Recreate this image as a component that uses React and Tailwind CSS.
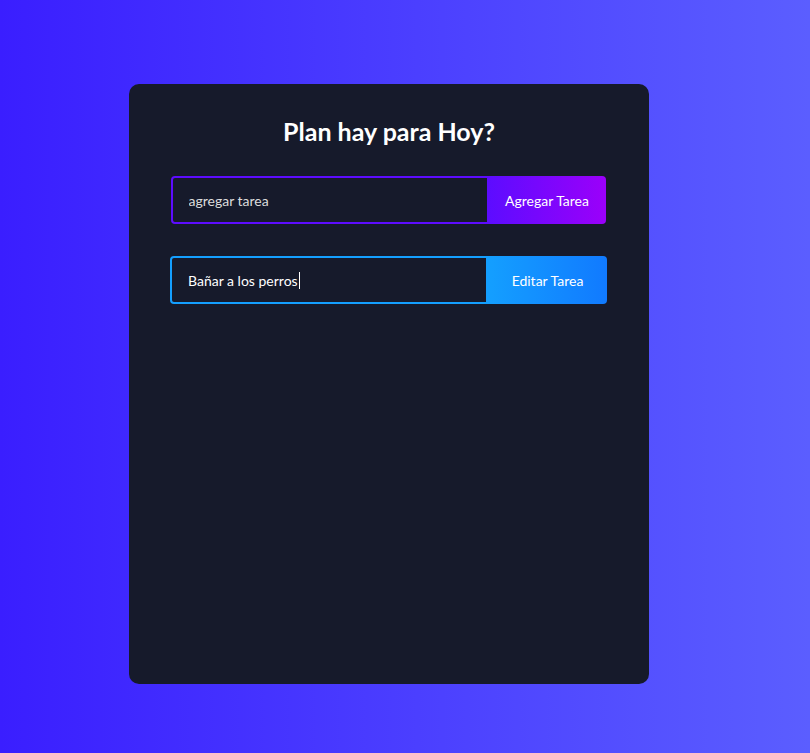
import React from 'react';

const font = { fontFamily: 'Lato, "Noto Sans", sans-serif' };

export default function App() {
  return (
    <div
      className="min-h-[753px] w-full bg-[linear-gradient(90deg,#3a1eff_0%,#5b5eff_100%)] pt-[84px] pl-[129px]"
      style={font}
    >
      <div className="flex h-[600px] w-[520px] flex-col items-center rounded-[10px] bg-[#161a2b] pt-[32px]">
        <h1 className="text-[25px] leading-[30px] font-bold text-white">Plan hay para Hoy?</h1>

        {/* nueva tarea */}
        <form className="mt-[30px] ml-[-2px] flex h-[48px]">
          <input
            type="text"
            placeholder="agregar tarea"
            className="w-[318px] rounded-l-[4px] border-2 border-[#5d0cff] bg-transparent pl-[16px] text-[14px] text-white outline-none placeholder:text-[#dcdcdc]"
          />
          <button
            type="button"
            className="w-[117px] rounded-r-[4px] bg-[linear-gradient(90deg,#5d0cff_0%,#9b00fa_100%)] text-[14px] text-white"
          >
            Agregar Tarea
          </button>
        </form>

        {/* editar tarea */}
        <div className="mt-[32px] mr-px flex h-[48px]">
          <div className="flex w-[318px] items-center rounded-l-[4px] border-2 border-[#149fff] pl-[16px] text-[14px] text-white">
            Bañar a los perros
            <span className="ml-px h-[17px] w-px bg-white" />
          </div>
          <button
            type="button"
            className="w-[119px] rounded-r-[4px] bg-[linear-gradient(90deg,#149fff_0%,#117aff_100%)] text-[14px] text-white"
          >
            Editar Tarea
          </button>
        </div>
      </div>
    </div>
  );
}
